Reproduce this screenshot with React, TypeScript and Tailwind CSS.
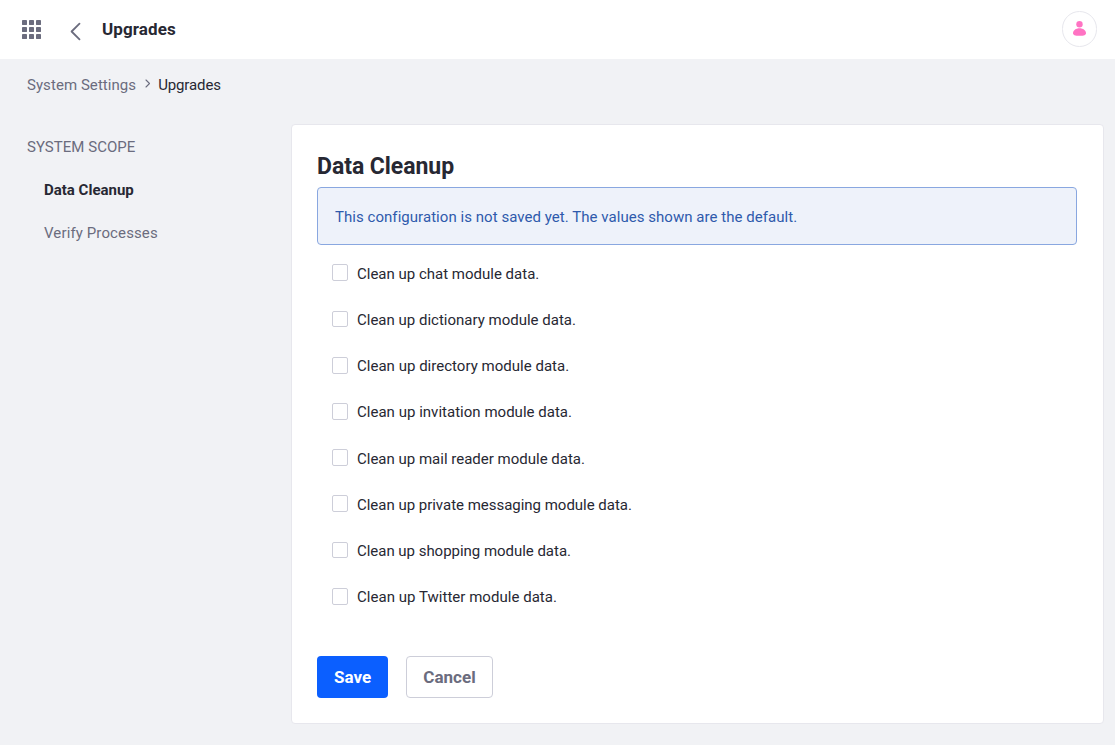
const modules = [
  { name: "chat", spacing: "" },
  { name: "dictionary", spacing: "" },
  { name: "directory", spacing: "tracking-[0.02px]" },
  { name: "invitation", spacing: "tracking-[0.02px]" },
  { name: "mail reader", spacing: "" },
  { name: "private messaging", spacing: "tracking-[-0.02px]" },
  { name: "shopping", spacing: "tracking-[-0.03px]" },
  { name: "Twitter", spacing: "tracking-[0.03px]" },
];

function GridIcon() {
  const cells = [0, 7, 14];
  return (
    <svg width="20" height="20" viewBox="0 0 20 20" fill="#6b6c7e" className="block">
      {cells.map((y) => cells.map((x) => <rect key={`${x}-${y}`} x={x} y={y} width="5" height="5" rx="0.4" />))}
    </svg>
  );
}

function Header() {
  return (
    <header className="flex h-[59px] items-start bg-white pl-[22px] pr-[17.6px]">
      <button aria-label="Applications" className="mt-5">
        <GridIcon />
      </button>
      <button aria-label="Back" className="ml-7 mt-[22px]">
        <svg width="12" height="19" viewBox="0 0 12 19" fill="none" stroke="#6b6c7e" strokeWidth="1.8" strokeLinecap="round" strokeLinejoin="round" className="block">
          <path d="M9.5 1.6 1.6 9.5 9.5 17.4" />
        </svg>
      </button>
      <h1 className="ml-5 mt-[17px] text-[17px] leading-6 font-bold tracking-[0.1px]">Upgrades</h1>
      <div className="ml-auto mt-[11px] flex h-[36px] w-[35.4px] items-center justify-center rounded-full border border-[#e7e7ed]">
        <svg width="14" height="16" viewBox="0.8 0 14 16" fill="#ff73c3" className="block">
          <circle cx="7.3" cy="3.2" r="3.2" />
          <path d="M7.3 7.2C3.6 7.2.8 9.5.8 12 .8 14.2 2.6 14.8 7.3 14.8s6.5-.6 6.5-2.8C13.8 9.5 11 7.2 7.3 7.2Z" />
        </svg>
      </div>
    </header>
  );
}

export default function App() {
  return (
    <div className="min-h-[745px] bg-[#f1f2f5] font-['Roboto',sans-serif] text-[15px] leading-[23px] text-[#272833]">
      <Header />
      <nav className="flex h-[65px] items-start pl-[27px] pt-[15px]">
        <span className="tracking-[0.06px] text-[#6b6c7e]">System Settings</span>
        <svg width="6" height="9" viewBox="0 0 6 9" fill="none" stroke="#6b6c7e" strokeWidth="1.1" strokeLinecap="round" strokeLinejoin="round" className="ml-[9px] mr-[7px] mt-[5px]">
          <path d="M1 1l3.5 3.5L1 8" />
        </svg>
        <span className="tracking-[-0.12px]">Upgrades</span>
      </nav>
      <div className="flex items-start pr-[11px]">
        <aside className="w-[291px] shrink-0 pl-[27px] pt-[12px] text-[#6b6c7e]">
          <div className="tracking-[0.03px]">SYSTEM SCOPE</div>
          <ul className="flex flex-col gap-5 pl-[17px] pt-5">
            <li className="font-bold text-[#272833]">Data Cleanup</li>
            <li className="tracking-[0.12px]">Verify Processes</li>
          </ul>
        </aside>
        <main className="h-[600px] grow rounded border border-[#e7e7ed] bg-white pl-[25px] pr-[26px] pt-[25px]">
          <h2 className="h-[37px] text-[23px] leading-[33px] font-bold tracking-[-0.05px]">Data Cleanup</h2>
          <div className="flex h-[58px] items-center rounded border border-[#89a7e0] bg-[#eef2fa] px-[17px] pt-[2px] tracking-[0.045px] text-[#2e5aac]">
            This configuration is not saved yet. The values shown are the default.
          </div>
          <div className="pl-[15px] pt-[17.8px]">
            {modules.map(({ name, spacing }) => (
              <label key={name} className="flex h-[46.2px] items-start">
                <input type="checkbox" className="mt-[1.6px] mr-[9px] h-[16.8px] w-4 shrink-0 appearance-none rounded-[2px] border border-[#cdced9] bg-white checked:border-[#0b5fff] checked:bg-[#0b5fff]" />
                <span className={spacing}>Clean up {name} module data.</span>
              </label>
            ))}
          </div>
          <div className="mt-[23.6px] flex gap-[18px] text-[17px] font-bold">
            <button className="h-[42px] w-[71px] rounded bg-[#0b5fff] pt-px text-white">Save</button>
            <button className="h-[42px] w-[87px] rounded border border-[#cdced9] bg-white pt-px text-[#6b6c7e]">Cancel</button>
          </div>
        </main>
      </div>
    </div>
  );
}
